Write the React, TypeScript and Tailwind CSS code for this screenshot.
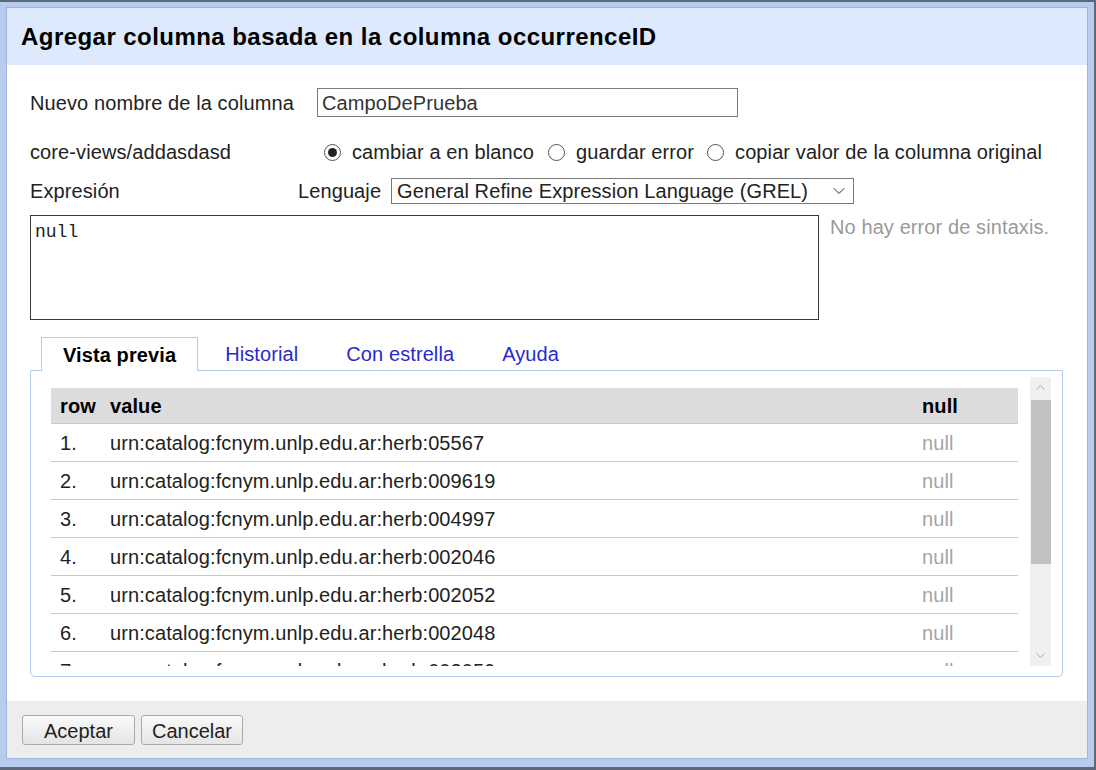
import { ChevronDown, ChevronUp } from 'lucide-react';

const rows = [
  'urn:catalog:fcnym.unlp.edu.ar:herb:05567',
  'urn:catalog:fcnym.unlp.edu.ar:herb:009619',
  'urn:catalog:fcnym.unlp.edu.ar:herb:004997',
  'urn:catalog:fcnym.unlp.edu.ar:herb:002046',
  'urn:catalog:fcnym.unlp.edu.ar:herb:002052',
  'urn:catalog:fcnym.unlp.edu.ar:herb:002048',
  'urn:catalog:fcnym.unlp.edu.ar:herb:002059',
];

function Radio({ checked }: { checked?: boolean }) {
  return (
    <span className="w-[17px] h-[17px] rounded-full border border-[#555] bg-white flex items-center justify-center shrink-0">
      {checked && <span className="w-[9px] h-[9px] rounded-full bg-[#222]" />}
    </span>
  );
}

export default function App() {
  return (
    <div className="w-[1096px] h-[770px] bg-[#5d6878] pt-[2px] pr-[2px] pb-[3px] font-['Liberation_Sans',Arial,sans-serif] text-[#222]">
      <div className="h-full bg-[#b8cdee] pl-[6px] pr-[6px] pt-[5px] pb-[8px]">
        <div className="h-full border border-[#9db6de] bg-white flex flex-col">
          {/* Header */}
          <div className="h-[57px] shrink-0 bg-[#dde9fc] flex items-center pl-[14px]">
            <h1 className="text-[24px] font-bold text-black tracking-[0.45px]">
              Agregar columna basada en la columna occurrenceID
            </h1>
          </div>

          {/* Body */}
          <div className="flex-1 pl-[23px] pr-[21px] pt-[23px] text-[20px] tracking-[0.1px]">
            <div className="flex items-center h-[29px]">
              <span className="w-[287px]">Nuevo nombre de la columna</span>
              <div className="w-[421px] h-[29px] border-[1.5px] border-[#7a7a7a] flex items-center pl-[4px] text-[#333]">
                CampoDePrueba
              </div>
            </div>

            <div className="flex items-center h-[26px] mt-[22px]">
              <span className="w-[294px]">core-views/addasdasd</span>
              <Radio checked />
              <span className="ml-[11px]">cambiar a en blanco</span>
              <span className="ml-[14px]"><Radio /></span>
              <span className="ml-[11px]">guardar error</span>
              <span className="ml-[13px]"><Radio /></span>
              <span className="ml-[11px]">copiar valor de la columna original</span>
            </div>

            <div className="flex items-center h-[26px] mt-[13px]">
              <span className="w-[268px]">Expresión</span>
              <span>Lenguaje</span>
              <div className="ml-[10px] w-[463px] h-[26px] border border-[#7a7a7a] flex items-center justify-between pl-[5px] pr-[4px]">
                <span>General Refine Expression Language (GREL)</span>
                <ChevronDown className="w-[20px] h-[20px] text-[#333]" strokeWidth={1.2} />
              </div>
            </div>

            <div className="flex mt-[11px]">
              <div className="w-[789px] h-[105px] border-[1.5px] border-[#3a3a3a] px-[4px] pt-[3px] font-['Liberation_Mono',monospace] text-[18px] tracking-normal">
                null
              </div>
              <span className="ml-[11px] mt-[-3px] text-[#9a9a9a]">No hay error de sintaxis.</span>
            </div>

            {/* Tabs */}
            <div className="mt-[17px] ml-[11px] flex items-end h-[33px]">
              <div className="h-[34px] px-[21px] border border-b-0 border-[#b5c9ed] bg-white flex items-center font-bold text-black mb-[-1px] relative z-10">
                Vista previa
              </div>
              <div className="px-[21px] ml-[6px] h-[33px] flex items-center text-[#2a2acb]">Historial</div>
              <div className="px-[21px] ml-[6px] h-[33px] flex items-center text-[#2a2acb]">Con estrella</div>
              <div className="px-[21px] ml-[6px] h-[33px] flex items-center text-[#2a2acb]">Ayuda</div>
            </div>

            <div className="w-[1033px] h-[307px] border border-[#b5c9ed] rounded-b-[5px] pl-[12px] pr-[11px] pt-[6px] pb-[10px]">
              <div className="h-full flex">
                <div className="flex-1 overflow-hidden pl-[8px] pr-[12px] pt-[11px]">
                  <div className="h-[36px] bg-[#dcdcdc] flex items-center font-bold text-black border-b border-[#c8c8c8]">
                    <span className="w-[59px] pl-[9px]">row</span>
                    <span className="flex-1">value</span>
                    <span className="w-[96px]">null</span>
                  </div>
                  {rows.map((v, i) => (
                    <div key={i} className="h-[38px] flex items-center border-b border-[#c8c8c8]">
                      <span className="w-[59px] pl-[9px]">{i + 1}.</span>
                      <span className="flex-1">{v}</span>
                      <span className="w-[96px] text-[#a5a5a5]">null</span>
                    </div>
                  ))}
                </div>
                <div className="w-[21px] h-full bg-[#f0f0f0] flex flex-col items-center">
                  <ChevronUp className="w-[15px] h-[15px] text-[#999] mt-[3px]" strokeWidth={1.3} />
                  <div className="w-[20px] h-[164px] bg-[#c1c1c1] mt-[5px]" />
                  <div className="flex-1" />
                  <ChevronDown className="w-[15px] h-[15px] text-[#999] mb-[3px]" strokeWidth={1.3} />
                </div>
              </div>
            </div>
          </div>

          {/* Footer */}
          <div className="h-[57px] shrink-0 bg-[#ededed] flex items-center pl-[15px] gap-[6px] text-[20px]">
            <button className="w-[113px] h-[30px] rounded-[3px] border border-[#ababab] bg-gradient-to-b from-[#fafafa] to-[#e4e4e4] text-[#222]">
              Aceptar
            </button>
            <button className="w-[102px] h-[30px] rounded-[3px] border border-[#ababab] bg-gradient-to-b from-[#fafafa] to-[#e4e4e4] text-[#222]">
              Cancelar
            </button>
          </div>
        </div>
      </div>
    </div>
  );
}
